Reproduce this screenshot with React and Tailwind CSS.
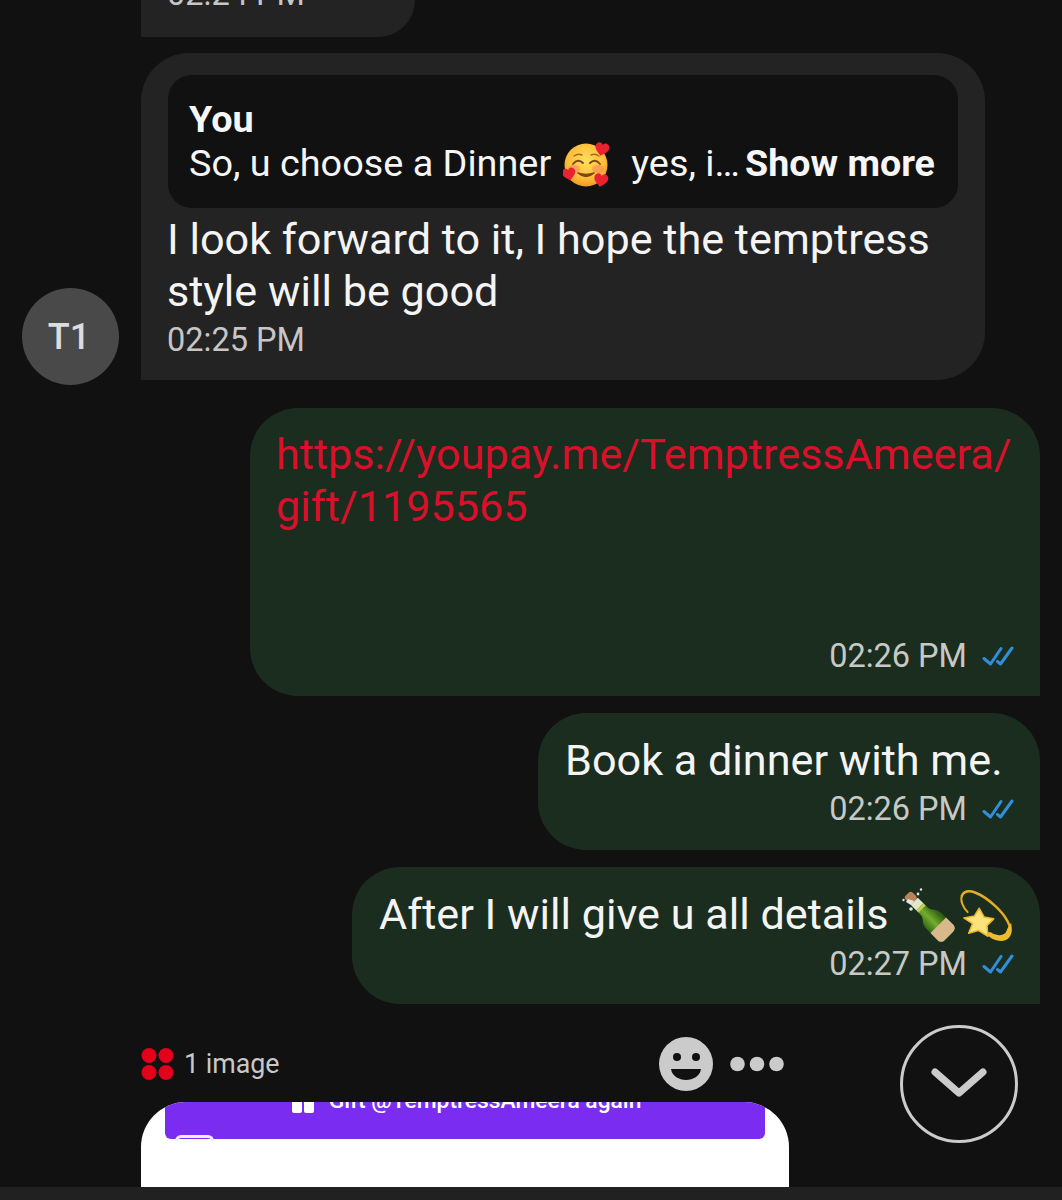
import { useId } from "react";

function Checks() {
  return (
    <svg width="32" height="22" viewBox="0 0 32 22" fill="none" className="shrink-0" aria-hidden>
      <path d="M2 13.5 L8.5 19 L19 3.5" stroke="#2f8fdc" strokeWidth="3" strokeLinecap="round" strokeLinejoin="round" />
      <path d="M15.5 16.5 L18.5 19 L30 3" stroke="#2f8fdc" strokeWidth="3" strokeLinecap="round" strokeLinejoin="round" />
    </svg>
  );
}

function Heart({ x, y, s = 1, r = 0 }) {
  return (
    <path
      transform={`translate(${x} ${y}) rotate(${r}) scale(${s})`}
      d="M0 7 C-3 4 -7 2 -7 -2 C-7 -5 -4 -7 -2 -6 C-1 -5.6 -.4 -4.8 0 -4 C.4 -4.8 1 -5.6 2 -6 C4 -7 7 -5 7 -2 C7 2 3 4 0 7 Z"
      fill="#e8232f"
    />
  );
}

function HeartsEmoji() {
  const id = useId();
  return (
    <svg width="48" height="48" viewBox="0 0 48 48" className="inline-block align-middle ml-[12px] mr-[20px] -mt-[3px]" aria-hidden>
      <defs>
        <radialGradient id={id} cx="50%" cy="40%" r="60%">
          <stop offset="0%" stopColor="#ffdf5e" />
          <stop offset="70%" stopColor="#fdbd3a" />
          <stop offset="100%" stopColor="#f39a22" />
        </radialGradient>
      </defs>
      <circle cx="23" cy="24" r="21.5" fill={`url(#${id})`} />
      <ellipse cx="11" cy="28" rx="6" ry="4" fill="#f6885a" opacity=".6" />
      <ellipse cx="35" cy="28" rx="6" ry="4" fill="#f6885a" opacity=".6" />
      <path d="M10 23 Q15 17 20 22 M27 22 Q32 17 37 23" stroke="#7a4a12" strokeWidth="1.9" fill="none" strokeLinecap="round" />
      <path d="M11 15 Q15 12 19 14 M28 14 Q32 12 36 15" stroke="#a86b1c" strokeWidth="1.4" fill="none" strokeLinecap="round" />
      <path d="M15 32 Q23 39 31 32 Q23 35 15 32 Z" fill="#7a4a12" stroke="#7a4a12" strokeWidth="1.6" strokeLinejoin="round" />
      <Heart x={39} y={8} s={1} r={12} />
      <Heart x={6} y={33} s={.95} r={-12} />
      <Heart x={38} y={39} s={1} r={10} />
    </svg>
  );
}

function BottleEmoji() {
  const id = useId();
  return (
    <svg width="54" height="54" viewBox="0 0 54 54" className="shrink-0 ml-[13px]" aria-hidden>
      <defs>
        <linearGradient id={id} x1="0" y1="0" x2="1" y2="0">
          <stop offset="0%" stopColor="#2f6614" />
          <stop offset="45%" stopColor="#74ad2e" />
          <stop offset="100%" stopColor="#27540f" />
        </linearGradient>
      </defs>
      <g transform="translate(8 9) rotate(-45)">
        {/* cork, foil, neck, body, label */}
        <rect x="-5" y="-4" width="10" height="10" rx="3" fill="#b98558" />
        <rect x="-5" y="6" width="10" height="8" fill="#e4e6c8" />
        <path d="M-5 14 H5 V20 C5 25 11 27 11 34 V50 C11 53 9 55 6 55 H-6 C-9 55 -11 53 -11 50 V34 C-11 27 -5 25 -5 20 Z" fill={`url(#${id})`} />
        <rect x="-5" y="14" width="10" height="3" fill="#c5cf5a" />
        <path d="M-11 40 H11 V50 C11 53 9 55 6 55 H-6 C-9 55 -11 53 -11 50 Z" fill="#d8b98c" />
      </g>
      <circle cx="19" cy="1.5" r="1.2" fill="#dfe5e8" />
      <circle cx="1.5" cy="12" r="1.2" fill="#dfe5e8" />
      <circle cx="9" cy="21" r="1.8" fill="#dfe5e8" />
      <circle cx="16" cy="6" r="1.4" fill="#dfe5e8" />
      <path d="M4 14 L9 17 L12 13 L6 11 Z" fill="#dfe5e8" />
    </svg>
  );
}

function DizzyEmoji() {
  return (
    <svg width="54" height="56" viewBox="0 0 56 56" className="shrink-0 ml-[3px]" aria-hidden>
      <path d="M3 8 C8 -2 24 6 38 19 C49 29 56 42 52 48" stroke="#e8ad25" strokeWidth="2.6" fill="none" strokeLinecap="round" />
      <path d="M3 8 C1 13 4 20 9 25" stroke="#e8ad25" strokeWidth="2" fill="none" strokeLinecap="round" />
      <path d="M54 36 C56 46 54 54 44 55 C37 55 30 51 27 46 L33 46 C38 50 47 50 49 45 C50 42 52 39 54 36 Z" fill="#f0bb2d" />
      <path d="M21 21 L26 30 L36 32 L29 39 L30 50 L20 44 L10 47 L14 37 L5 31 L16 29 Z" fill="#fbe27c" stroke="#eab52d" strokeWidth="1.6" strokeLinejoin="round" />
    </svg>
  );
}

function Sent({ width, height, time, pad, children, textColor = "text-[#f4f4f4]" }) {
  return (
    <div className={`ml-auto mr-[22px] flex flex-col pr-[26px] bg-[#1b2d1f] rounded-t-[48px] rounded-bl-[48px] ${pad} ${width} ${height}`}>
      <div className={`text-[43.2px] leading-[52px] ${textColor}`}>{children}</div>
      <div className="mt-auto flex items-center justify-end gap-[15px] text-[32.5px] leading-[44px] text-[#c6c9c6]">
        <span>{time}</span>
        <Checks />
      </div>
    </div>
  );
}

export default function App() {
  return (
    <div className="relative h-[1200px] overflow-hidden bg-[#111112] flex flex-col font-['Roboto',sans-serif] antialiased">
      {/* previous message, cut by the top of the screen */}
      <div className="ml-[141px] w-[274px] h-[37px] shrink-0 flex flex-col justify-end pl-[26px] pb-[21px] bg-[#232323] rounded-br-[48px] overflow-hidden">
        <div className="shrink-0 text-[32.5px] leading-[44px] text-[#c6c6c6]">02:24 PM</div>
      </div>

      <div className="mt-[16px] ml-[22px] flex items-end gap-[22px]">
        <div className="w-[97px] h-[97px] -mb-[5px] rounded-full bg-[#494949] flex items-center justify-center text-[36px] font-medium text-[#dcdcdc] pr-[3px]">T1</div>
        <div className="w-[844px] pt-[22px] pb-[18px] bg-[#232323] rounded-t-[48px] rounded-br-[48px]">
          <div className="mx-[27px] h-[133px] px-[21px] pt-[22px] rounded-[24px] bg-[#111112] text-[#f6f6f6] text-[37.8px] leading-[44px] whitespace-nowrap">
            <div className="font-bold">You</div>
            <div>
              So, u choose a Dinner<HeartsEmoji />yes, i… <span className="font-bold text-[37.6px] -ml-[4px]">Show more</span>
            </div>
          </div>
          <div className="mt-[6px] pl-[26px] text-[43.2px] leading-[52px] text-[#f4f4f4]">
            I look forward to it, I hope the temptress
            <br />
            style will be good
          </div>
          <div className="pl-[26px] text-[32.5px] leading-[44px] text-[#c6c6c6]">02:25 PM</div>
        </div>
      </div>

      <div className="mt-[28px] flex flex-col gap-[17px]">
        <Sent width="w-[790px]" height="h-[288px]" time="02:26 PM" pad="pl-[26px] pt-[21px] pb-[18px]" textColor="text-[#d8102a]">
          https://youpay.me/TemptressAmeera/
          <br />
          gift/1195565
        </Sent>
        <Sent width="w-[502px]" height="h-[137px]" time="02:26 PM" pad="pl-[27px] pt-[22px] pb-[19px]">Book a dinner with me.</Sent>
        <Sent width="w-[688px]" height="h-[137px]" time="02:27 PM" pad="pl-[27px] pt-[22px] pb-[18px]">
          <span className="flex items-center h-[52px] whitespace-nowrap">
            After I will give u all details
            <BottleEmoji />
            <DizzyEmoji />
          </span>
        </Sent>
      </div>

      {/* typing / image row */}
      <div className="mt-[32px] mb-[10px] ml-[141px] w-[643px] h-[56px] shrink-0 flex items-center">
        <svg width="33" height="34" viewBox="0 0 33 34" aria-hidden>
          <circle cx="8" cy="8.5" r="7.5" fill="#e2001a" />
          <circle cx="25" cy="8.5" r="7.5" fill="#e2001a" />
          <circle cx="8" cy="25.5" r="7.5" fill="#e2001a" />
          <circle cx="25" cy="25.5" r="7.5" fill="#e2001a" />
        </svg>
        <span className="ml-[10px] text-[26.8px] text-[#c8c8c8]">1 image</span>
        <svg width="54" height="54" viewBox="0 0 54 54" className="ml-auto" aria-hidden>
          <circle cx="27" cy="27" r="27" fill="#cbcbcb" />
          <circle cx="18" cy="20" r="4" fill="#111112" />
          <circle cx="37" cy="20" r="4" fill="#111112" />
          <path d="M12 32 H42 C41 39 34 43 27 43 C20 43 13 39 12 32 Z" fill="#111112" />
        </svg>
        <svg width="54" height="16" viewBox="0 0 54 16" className="ml-[17px]" aria-hidden>
          <circle cx="7.5" cy="8" r="7.3" fill="#cbcbcb" />
          <circle cx="27" cy="8" r="7.3" fill="#cbcbcb" />
          <circle cx="46.5" cy="8" r="7.3" fill="#cbcbcb" />
        </svg>
      </div>

      {/* image attachment preview */}
      <div className="relative ml-[141px] w-[648px] h-[85px] shrink-0 bg-white rounded-t-[45px] overflow-hidden">
        <div className="mx-[24px] h-[37px] bg-[#7a2cf0] rounded-b-[6px] overflow-hidden flex justify-center pl-[3px] text-white text-[22.8px] leading-[28px] font-medium">
          <div className="-mt-[15px] flex items-center gap-[15px] h-[28px] whitespace-nowrap">
            <svg width="22" height="24" viewBox="0 0 22 24" aria-hidden>
              <rect x="0" y="6" width="10" height="18" rx="2" fill="#fff" />
              <rect x="12" y="6" width="10" height="18" rx="2" fill="#fff" />
            </svg>
            <span>Gift @TemptressAmeera again</span>
          </div>
        </div>
        <div className="absolute left-[34px] top-[33px] w-[39px] h-[6px] rounded-t-[10px] border-[3px] border-b-0 border-[#f3eaff]" />
      </div>

      <div className="mt-auto h-[13px] shrink-0 bg-[#212121]" />

      {/* scroll to bottom button */}
      <button className="absolute right-[44px] bottom-[57px] w-[118px] h-[118px] rounded-full border-[3px] border-[#cbcbcb] flex items-center justify-center">
        <svg width="58" height="34" viewBox="0 0 58 34" fill="none" aria-hidden>
          <path d="M5 5 L29 26 L53 5" stroke="#cbcbcb" strokeWidth="7" strokeLinecap="round" strokeLinejoin="round" />
        </svg>
      </button>
    </div>
  );
}
